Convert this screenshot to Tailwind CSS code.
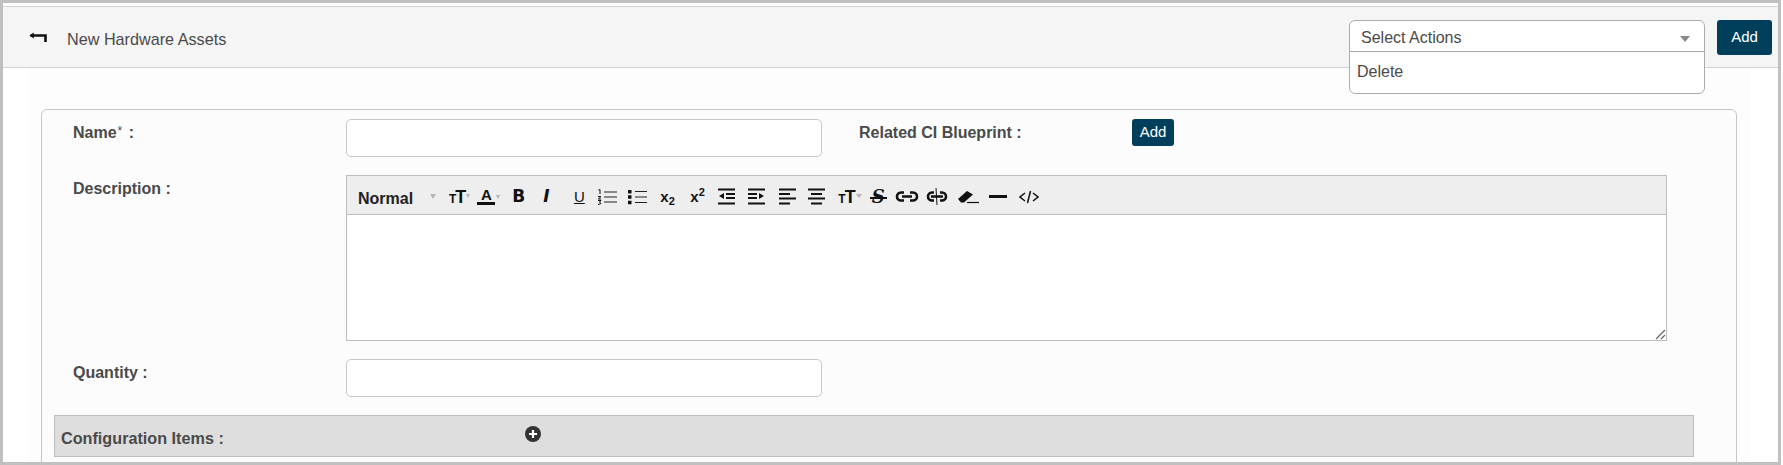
<!DOCTYPE html>
<html lang="en">
<head>
  <meta charset="UTF-8" />
  <title>New Hardware Assets</title>
  <script src="https://cdn.jsdelivr.net/npm/@tailwindcss/browser@4"></script>
</head>
<body class="h-[465px] w-[1783px] overflow-hidden bg-white font-['Liberation_Sans',Arial,sans-serif] text-[#4a4a4a]">
  <div class="h-[465px] w-[1781px] overflow-hidden border-[3px] border-[#c0c0c0] bg-white">

    <!-- header bar -->
    <header class="relative mt-[3px] flex h-[62px] items-center border-y border-[#d2d2d2] bg-[#f5f5f5] pl-[26px]">
      <svg width="18" height="12" viewBox="0 0 18 12" class="mt-[2px]">
        <path d="M1.5 3.5H16.5V10" fill="none" stroke="#111" stroke-width="2.6" />
        <path d="M0.5 3.5L4.8 0.5V6.5Z" fill="#111" />
      </svg>
      <span class="ml-[20px] mt-[5px] text-[16.2px]">New Hardware Assets</span>

      <div class="absolute left-[1346px] top-[13px] z-10 w-[356px] rounded-md border border-[#acacac] bg-white">
        <div class="relative flex h-[31px] items-center border-b border-[#acacac] pl-[11px] pt-[3px] text-[16px]">
          Select Actions
          <span class="absolute right-[14px] top-[15px] h-0 w-0 border-x-[5px] border-t-[6px] border-x-transparent border-t-[#8a8a8a]"></span>
        </div>
        <div class="flex h-[41px] items-start pl-[7px] pt-[8px] text-[16px]">Delete</div>
      </div>
      <button class="absolute left-[1714px] top-[13px] h-[35px] w-[55px] rounded-[3px] bg-[#003f5c] text-[15px] text-white">Add</button>
    </header>

    <!-- form area -->
    <main class="ml-[25px] mr-[28px] bg-[#fdfdfd] pt-[41px] pl-[13px] pr-[13px]">
      <div class="h-[400px] rounded-t-md border border-[#c6c6c6] bg-[#fcfcfc] pt-[9px]">

        <div class="flex">
          <label class="w-[304px] pl-[31px] pt-[2px] text-[16px] font-bold">Name<sup class="relative -top-[3px] ml-[1px] text-[12px] font-normal">*</sup> <span class="ml-[2px]">:</span></label>
          <input type="text" class="h-[38px] w-[476px] rounded-[5px] border border-[#c8c8c8] bg-white" />
          <label class="ml-[37px] w-[273px] pt-[2px] text-[16px] font-bold">Related CI Blueprint :</label>
          <button class="h-[27px] w-[42px] rounded-[3px] bg-[#003f5c] text-[15px] text-white">Add</button>
        </div>

        <div class="mt-[18px] flex">
          <label class="w-[304px] pl-[31px] pt-[2px] text-[16px] font-bold">Description :</label>
          <div class="h-[166px] w-[1321px] border border-[#bdbdbd] bg-white">
            <div class="flex h-[39px] items-center border-b border-[#bdbdbd] bg-[#eeeeee] pt-[3px] text-[#111]">
              <span class="ml-[11px] mt-[4px] w-[72px] text-[16px] font-bold text-[#222]">Normal</span>
              <span class="h-0 w-0 border-x-[3px] border-t-[5px] border-x-transparent border-t-[#b5b5b5]"></span>

              <!-- text height -->
              <span class="ml-[13px] flex items-baseline">
                <span class="text-[12px] font-bold leading-none">T</span><span class="-ml-[1px] text-[18px] font-bold leading-none">T</span>
                <span class="relative -top-[5px] h-0 w-0 border-x-[2px] border-t-[4px] border-x-transparent border-t-[#b5b5b5]"></span>
              </span>
              <span class="ml-[7px] flex items-center">
                <span class="flex flex-col items-center">
                  <span class="text-[15px] font-bold leading-[14px]">A</span>
                  <span class="h-[3px] w-[18px] bg-[#111]"></span>
                </span>
                <span class="ml-[1px] h-0 w-0 border-x-[2px] border-t-[4px] border-x-transparent border-t-[#b5b5b5]"></span>
              </span>
              <span class="ml-[12px] w-[13px] font-['DejaVu_Sans'] text-[17px] font-bold leading-none">B</span>
              <span class="ml-[18px] w-[11px] font-['DejaVu_Sans'] text-[17px] font-bold italic leading-none">I</span>
              <span class="ml-[19px] w-[12px] text-center text-[15px] leading-none underline">U</span>

              <svg width="20" height="16" viewBox="0 0 20 16" class="ml-[12px]">
                <path d="M7 3H20M7 8H20M7 13H20" stroke="#222" stroke-width="1.2" />
                <path d="M1.5 1L3 .5V5M1 7.5H4L1.3 10H4M1 11.5H4L2.5 13L4 14.5L1 15.5" fill="none" stroke="#111" stroke-width="1" />
              </svg>
              <svg width="19" height="16" viewBox="0 0 19 16" class="ml-[11px]">
                <path d="M7 2.5H19M7 8H19M7 13.5H19" stroke="#222" stroke-width="1.2" />
                <path d="M0 1H3.5V4.5H0ZM0 6.2H3.5V9.7H0ZM0 11.8H3.5V15.3H0Z" fill="#111" />
              </svg>
              <span class="ml-[13px] flex w-[18px] items-end text-[15px] font-bold leading-none">x<span class="relative top-[3px] text-[11px] leading-none">2</span></span>
              <span class="ml-[12px] flex w-[18px] items-start text-[15px] font-bold leading-none">x<span class="relative -top-[2px] text-[11px] leading-none">2</span></span>

              <svg width="17" height="18" viewBox="0 0 17 18" class="ml-[10px]">
                <path d="M0 1.5H17M8 6H17M8 10H17M0 15.5H17" stroke="#111" stroke-width="2.2" />
                <path d="M6 5V11L1 8Z" fill="#111" />
              </svg>
              <svg width="17" height="18" viewBox="0 0 17 18" class="ml-[13px]">
                <path d="M0 1.5H17M0 6H9M0 10H9M0 15.5H17" stroke="#111" stroke-width="2.2" />
                <path d="M11 5V11L16 8Z" fill="#111" />
              </svg>
              <svg width="17" height="18" viewBox="0 0 17 18" class="ml-[14px]">
                <path d="M0 1.5H17M0 6H11M0 10.5H17M0 15.5H11" stroke="#111" stroke-width="2.2" />
              </svg>
              <svg width="17" height="18" viewBox="0 0 17 18" class="ml-[12px]">
                <path d="M0 1.5H17M3 6H14M0 10.5H17M3 15.5H14" stroke="#111" stroke-width="2.2" />
              </svg>

              <span class="ml-[13px] flex items-baseline">
                <span class="text-[12px] font-bold leading-none">T</span><span class="-ml-[1px] text-[18px] font-bold leading-none">T</span>
                <span class="relative -top-[5px] h-0 w-0 border-x-[3px] border-t-[4px] border-x-transparent border-t-[#b5b5b5]"></span>
              </span>
              <span class="relative ml-[8px] w-[17px] text-center font-['DejaVu_Serif'] text-[18px] font-bold italic leading-none">S<span class="absolute left-0 top-[9px] h-[2px] w-[17px] bg-[#111]"></span></span>

              <svg width="24" height="11" viewBox="0 0 24 11" class="ml-[8px]">
                <path d="M9 1.5H6A4 4 0 0 0 6 9.5H9M15 1.5H18A4 4 0 0 1 18 9.5H15M7 5.5H17" fill="none" stroke="#111" stroke-width="2.6" />
              </svg>
              <svg width="22" height="17" viewBox="0 0 22 17" class="ml-[7px]">
                <path d="M8 4.5H6A4 4 0 0 0 6 12.5H8M14 4.5H16A4 4 0 0 1 16 12.5H14M5 8.5H17" fill="none" stroke="#111" stroke-width="2.6" />
                <path d="M10 0L11 17" stroke="#111" stroke-width="1" />
              </svg>
              <svg width="21" height="14" viewBox="0 0 21 14" class="ml-[10px]">
                <path d="M0 9L9 1L15 4.5L6 12.5H3Z" fill="#111" />
                <path d="M9 12.5H21" stroke="#111" stroke-width="1.2" />
              </svg>
              <span class="ml-[10px] h-[2.5px] w-[18px] bg-[#111]"></span>
              <svg width="20" height="14" viewBox="0 0 20 14" class="ml-[12px]">
                <path d="M6 3L1 7L6 11M14 3L19 7L14 11M11.5 1L8.5 13" fill="none" stroke="#111" stroke-width="1.5" />
              </svg>
            </div>

            <!-- editor body, resize grip bottom right -->
            <div class="relative h-[125px] bg-white">
              <svg width="11" height="11" viewBox="0 0 11 11" class="absolute bottom-0 right-0">
                <path d="M1 10L10 1M6 10L10 6" stroke="#666" stroke-width="1.2" />
              </svg>
            </div>
          </div>
        </div>

        <div class="mt-[18px] flex">
          <label class="w-[304px] pl-[31px] pt-[2px] text-[16px] font-bold">Quantity :</label>
          <input type="text" class="h-[38px] w-[476px] rounded-[5px] border border-[#c8c8c8] bg-white" />
        </div>

        <div class="ml-[12px] mt-[18px] flex h-[42px] w-[1640px] items-center border border-[#bdbdbd] bg-[#dedede] pl-[6px]">
          <span class="w-[464px] pt-[4px] text-[16.2px] font-bold">Configuration Items :</span>
          <svg width="16" height="16" viewBox="0 0 16 16" class="mb-[5px]">
            <circle cx="8" cy="8" r="8" fill="#333" />
            <path d="M8 4V12M4 8H12" stroke="#fff" stroke-width="2.2" />
          </svg>
        </div>
      </div>
    </main>
  </div>
</body>
</html>
